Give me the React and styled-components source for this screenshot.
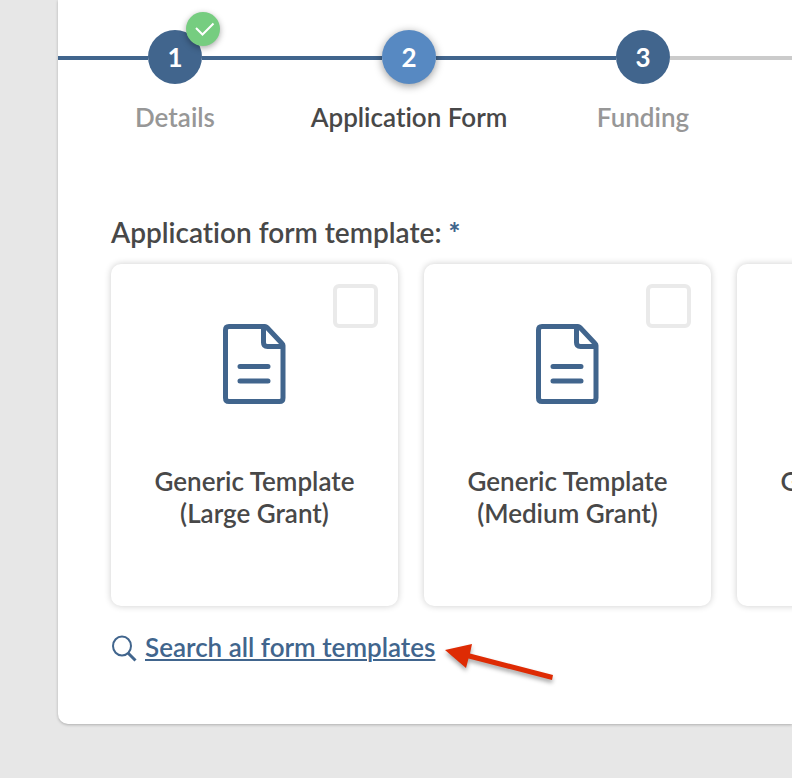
import React from "react";
import styled, { createGlobalStyle } from "styled-components";

const GlobalStyle = createGlobalStyle`
  * {
    box-sizing: border-box;
  }
  body {
    margin: 0;
    background: #e7e7e7;
    color: #484848;
    font-family: Lato, "Open Sans", sans-serif;
    font-size: 26px;
    font-weight: 600;
    font-variant-ligatures: none;
    line-height: 32px;
  }
`;

const Page = styled.main`
  min-height: 100vh;
  padding: 0 0 54px 58px;
  overflow: hidden;
`;

const Panel = styled.section`
  padding: 30px 0 45px;
  background: #fff;
  border-bottom-left-radius: 10px;
  box-shadow: 0 1px 3px rgba(0, 0, 0, 0.25);
`;

const Steps = styled.ol`
  display: flex;
  margin: 0;
  padding: 0;
  list-style: none;
`;

const Step = styled.li`
  flex: 0 0 234px;
  display: flex;
  flex-direction: column;
  gap: 17px;
  text-align: center;
  color: ${({ $current }) => ($current ? "#484848" : "#979797")};
`;

const Track = styled.div`
  display: flex;
  align-items: center;
  height: 54px;
`;

const Line = styled.span`
  flex: 1;
  height: 4px;
  margin-top: 2px;
  background: ${({ $done }) => ($done ? "#41658d" : "#cbcbcb")};
`;

const Rest = styled(Track)`
  flex: 1;
`;

const StepButton = styled.button`
  position: relative;
  width: 54px;
  height: 54px;
  padding: 0;
  border: 0;
  border-radius: 50%;
  background: ${({ $current }) => ($current ? "#5789c2" : "#41658d")};
  box-shadow: ${({ $current }) => ($current ? "0 2px 8px rgba(0, 0, 0, 0.4)" : "none")};
  color: #fff;
  font: inherit;
  font-weight: 700;
  cursor: pointer;
`;

const Badge = styled.span`
  position: absolute;
  top: -18px;
  right: -18px;
  display: flex;
  width: 34px;
  height: 34px;
  border-radius: 50%;
  background: #76cd80;
  box-shadow: 0 2px 6px rgba(0, 0, 0, 0.35);
`;

const Content = styled.div`
  padding: 83px 0 0 53px;
`;

const Fieldset = styled.fieldset`
  min-width: 0;
  margin: 0;
  padding: 0;
  border: 0;
`;

const Legend = styled.legend`
  padding: 0;
  font-size: 28px;
`;

const Required = styled.span`
  color: #41658d;
  font-weight: 900;
`;

const Cards = styled.div`
  display: flex;
  gap: 26px;
  padding-top: 16px;
`;

const Card = styled.label`
  flex: 0 0 287px;
  display: grid;
  align-content: start;
  min-height: 342px;
  padding: 20px 20px 60px;
  border-radius: 10px;
  background: #fff;
  box-shadow: 0 0 7px rgba(0, 0, 0, 0.2);
  cursor: pointer;
`;

const Checkbox = styled.input`
  grid-area: 1 / 1;
  justify-self: end;
  appearance: none;
  width: 45px;
  height: 44px;
  margin: 0;
  border: 4px solid #eaeaea;
  border-radius: 6px;
  &:checked {
    background: #41658d;
  }
`;

const CardIcon = styled.svg`
  grid-area: 1 / 1;
  justify-self: center;
  margin-top: 40px;
`;

const CardTitle = styled.span`
  padding-top: 61px;
  text-align: center;
`;

const SearchRow = styled.div`
  display: flex;
  align-items: flex-start;
  padding-top: 25px;
`;

const SearchLink = styled.a`
  display: flex;
  gap: 8px;
  color: #41658d;
  text-decoration: none;
  span {
    text-decoration: underline;
    text-decoration-thickness: 2px;
    text-underline-offset: 2px;
  }
`;

const Pointer = styled.svg`
  flex: none;
  margin-left: 8px;
  overflow: visible;
  filter: drop-shadow(0 3px 2px rgba(0, 0, 0, 0.35));
`;

const steps = [
  { label: "Details", done: true, before: true, after: true },
  { label: "Application Form", current: true, before: true, after: true },
  { label: "Funding", before: true, after: false },
];

const templates = ["Large Grant", "Medium Grant", "Small Grant"];

const DocumentIcon = () => (
  <CardIcon width="64" height="80" viewBox="0 0 64 80" fill="none" stroke="#41658d" strokeWidth="5" strokeLinejoin="round" aria-hidden="true">
    <path d="M42 2.5H6Q2.5 2.5 2.5 6V74Q2.5 77.5 6 77.5H56.5Q60 77.5 60 74V21.5Q60 20.5 59 19.5L44 3.5Q43 2.5 42 2.5Z" />
    <path d="M40.5 3V18.5Q40.5 22.5 44.5 22.5H60" />
    <path d="M17 42.5H45M17 57H45" strokeLinecap="round" />
  </CardIcon>
);

const App = () => {
  return (
    <>
      <GlobalStyle />
      <Page>
        <Panel>
          <Steps>
            {steps.map((step, i) => (
              <Step key={step.label} $current={step.current}>
                <Track>
                  <Line $done={step.before} />
                  <StepButton type="button" $current={step.current}>
                    {i + 1}
                    {step.done && (
                      <Badge>
                        <svg width="34" height="34" viewBox="0 0 34 34" fill="none" stroke="#fff" strokeWidth="2" aria-hidden="true">
                          <path d="M10 16L16.5 22.5L27.5 11.5" />
                        </svg>
                      </Badge>
                    )}
                  </StepButton>
                  <Line $done={step.after} />
                </Track>
                <span>{step.label}</span>
              </Step>
            ))}
            <Rest as="li">
              <Line />
            </Rest>
          </Steps>
          <Content>
            <Fieldset>
              <Legend>
                Application form template: <Required>*</Required>
              </Legend>
              <Cards>
                {templates.map((name) => (
                  <Card key={name}>
                    <DocumentIcon />
                    <Checkbox type="checkbox" name="template" value={name} />
                    <CardTitle>
                      Generic Template
                      <br />({name})
                    </CardTitle>
                  </Card>
                ))}
              </Cards>
            </Fieldset>
            <SearchRow>
              <SearchLink href="#templates">
                <svg width="26" height="32" viewBox="0 0 26 32" fill="none" stroke="#41658d" strokeWidth="2" aria-hidden="true">
                  <ellipse cx="11" cy="15" rx="9" ry="9.5" />
                  <path d="M17 22L24.5 29.5" strokeWidth="3" />
                </svg>
                <span>Search all form templates</span>
              </SearchLink>
              <Pointer width="112" height="48" viewBox="0 0 112 48" fill="#de2b04" aria-hidden="true">
                <path d="M2 19L29 13L27 22.5L110 44L109 49L25.5 27.5L23 37Z" />
              </Pointer>
            </SearchRow>
          </Content>
        </Panel>
      </Page>
    </>
  );
};

export default App;
